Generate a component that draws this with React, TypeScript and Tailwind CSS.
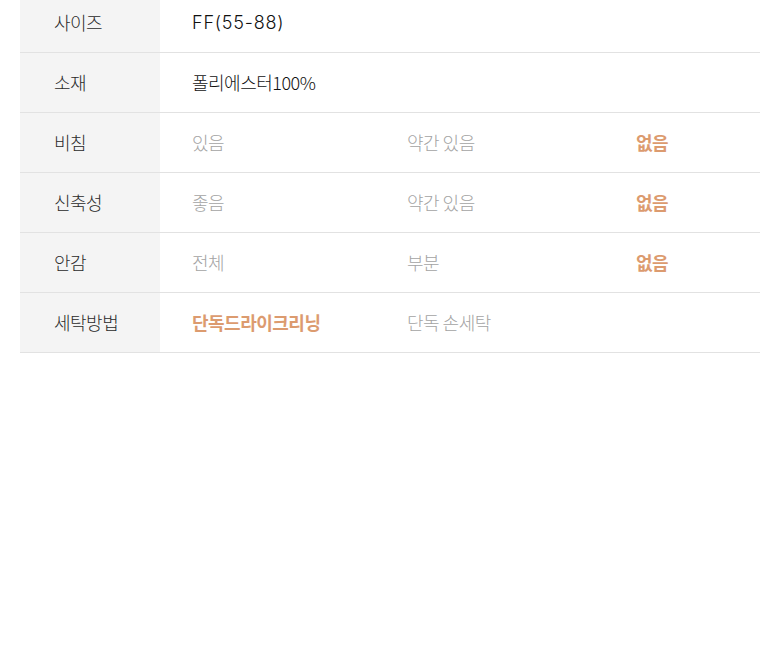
import { FC } from 'react';

interface SpecValue {
  text: string;
  active?: boolean;
  plain?: boolean;
  latin?: boolean;
}

interface SpecRow {
  label: string;
  values: SpecValue[];
}

const rows: SpecRow[] = [
  { label: '사이즈', values: [{ text: 'FF(55-88)', plain: true, latin: true }] },
  { label: '소재', values: [{ text: '폴리에스터100%', plain: true }] },
  { label: '비침', values: [{ text: '있음' }, { text: '약간 있음' }, { text: '없음', active: true }] },
  { label: '신축성', values: [{ text: '좋음' }, { text: '약간 있음' }, { text: '없음', active: true }] },
  { label: '안감', values: [{ text: '전체' }, { text: '부분' }, { text: '없음', active: true }] },
  { label: '세탁방법', values: [{ text: '단독드라이크리닝', active: true }, { text: '단독 손세탁' }] },
];

const widths = ['w-[215px]', 'w-[229px]', 'flex-1'];

const App: FC = () => {
  return (
    <div
      className="w-[780px] h-[652px] overflow-hidden bg-white"
      style={{ fontFamily: '"Noto Sans CJK KR", "Noto Sans", sans-serif' }}
    >
      <div className="mx-5 -mt-[7px]">
        {rows.map(row => (
          <div key={row.label} className="flex h-[60px] border-b border-[#e2e2e2]">
            <div className="w-[140px] bg-[#f4f4f4] pl-[34px] flex items-center text-[18px] font-light text-[#2a2a2a] tracking-[-0.5px]">
              {row.label}
            </div>
            <div className="flex flex-1">
              {row.values.map((v, i) => (
                <div
                  key={v.text}
                  className={`${v.plain ? 'flex-1' : widths[i]} pl-8 flex items-center text-[18px] ${
                    v.latin ? 'font-[Inter,sans-serif] tracking-[0.8px]' : 'tracking-[-0.5px]'
                  } ${
                    v.plain
                      ? 'text-[#111] font-light'
                      : v.active
                        ? 'text-[#dc9b6f] font-semibold'
                        : 'text-[#a3a3a3] font-light'
                  }`}
                >
                  {v.text}
                </div>
              ))}
            </div>
          </div>
        ))}
      </div>
    </div>
  );
};

export default App;
